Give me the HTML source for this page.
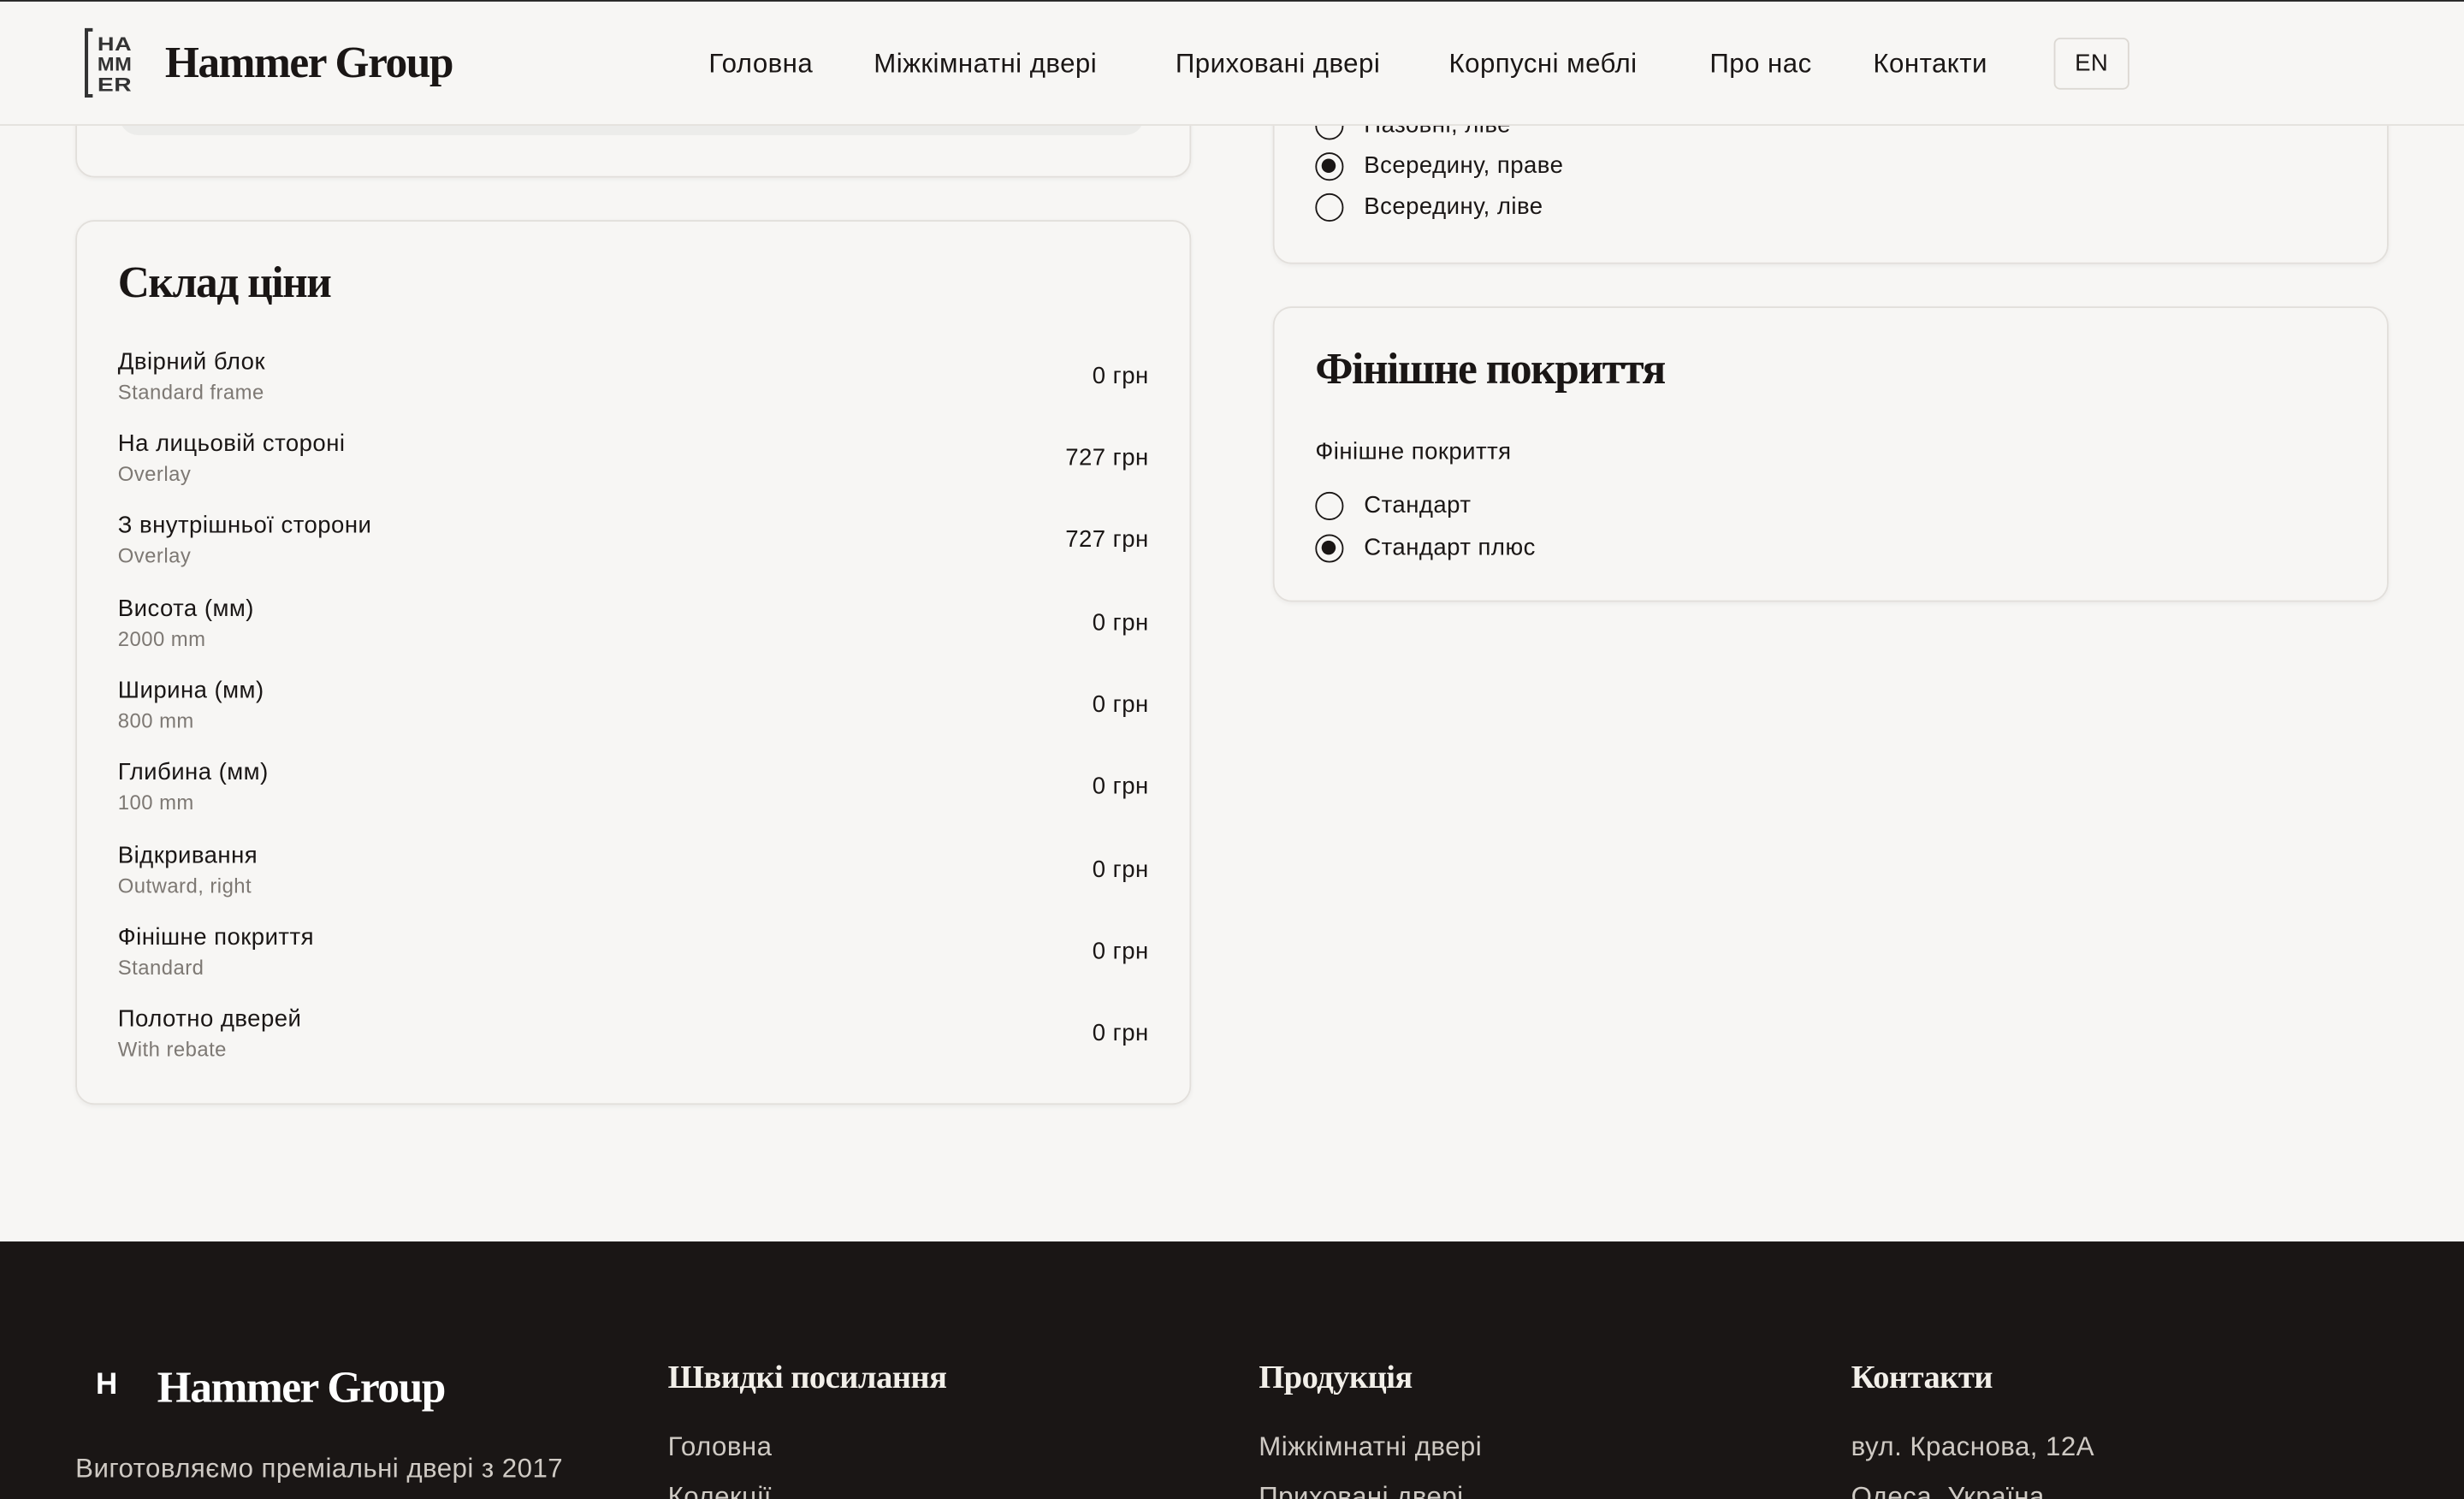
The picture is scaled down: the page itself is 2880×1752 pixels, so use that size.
<!DOCTYPE html>
<html><head><meta charset="utf-8"><style>
*{margin:0;padding:0;box-sizing:border-box}
html,body{width:2880px;height:1752px;overflow:hidden;background:#f7f6f4}
#w{position:absolute;left:0;top:0;width:1568px;height:954px;overflow:hidden;transform:scale(1.836735);transform-origin:0 0;font-family:"Liberation Sans","DejaVu Sans",sans-serif;color:#1a1615;letter-spacing:.25px}
.serif{font-family:"Liberation Serif","DejaVu Serif",serif;font-weight:bold;letter-spacing:-0.8px}
.card{position:absolute;background:#f7f6f4;border:1px solid #e2dfdb;border-radius:12px;box-shadow:0 1px 3px rgba(0,0,0,.05)}
.abs{position:absolute;white-space:nowrap}
.row{position:absolute;left:26px;right:26px;height:44px}
.row .l{font-size:15px;position:absolute;left:0;top:1px}
.row .s{font-size:13px;color:#7d7873;position:absolute;left:0;top:21px}
.row .p{font-size:15px;position:absolute;right:0;top:10px}
.radio{position:absolute;width:18px;height:18px;border:1.5px solid #1a1615;border-radius:50%}
.radio.on::after{content:"";position:absolute;left:3px;top:3px;width:9px;height:9px;border-radius:50%;background:#1a1615}
.rl{position:absolute;font-size:15px;white-space:nowrap}
.nav{position:absolute;top:31px;font-size:17px;white-space:nowrap}
.fh{position:absolute;top:864px;font-size:21px;color:#f2efe9}
.fl{position:absolute;font-size:17px;color:#cfcac4;white-space:nowrap}
</style></head><body><div id="w">
<div class="card" style="left:48px;top:-40px;width:710px;height:153px"></div>
<div style="position:absolute;left:76px;top:40px;width:652px;height:46px;background:#ececea;border-radius:0 0 12px 12px"></div>
<div class="card" style="left:810px;top:-40px;width:710px;height:208px"></div>
<div class="radio" style="left:837px;top:71px"></div><div class="rl" style="left:868px;top:71px">Назовні, ліве</div>
<div class="radio on" style="left:837px;top:97px"></div><div class="rl" style="left:868px;top:97px">Всередину, праве</div>
<div class="radio" style="left:837px;top:123px"></div><div class="rl" style="left:868px;top:123px">Всередину, ліве</div>

<div style="position:absolute;left:0;top:0;width:1568px;height:80px;background:#f7f6f4;border-top:1px solid #222;border-bottom:1px solid #e4e1dd"></div>
<svg class="abs" style="left:53px;top:17px" width="34" height="46" viewBox="0 0 34 46"><path d="M6 2H2V44H6" fill="none" stroke="#333" stroke-width="2.2"/>
<text x="9" y="15" font-family="Liberation Sans" font-weight="bold" font-size="12" fill="#333" textLength="22" lengthAdjust="spacingAndGlyphs">HA</text>
<text x="9" y="28" font-family="Liberation Sans" font-weight="bold" font-size="12" fill="#333" textLength="22" lengthAdjust="spacingAndGlyphs">MM</text>
<text x="9" y="41" font-family="Liberation Sans" font-weight="bold" font-size="12" fill="#333" textLength="22" lengthAdjust="spacingAndGlyphs">ER</text></svg>
<div class="abs serif" style="left:105px;top:25px;font-size:28px">Hammer Group</div>
<div class="nav" style="left:451px">Головна</div>
<div class="nav" style="left:556px">Міжкімнатні двері</div>
<div class="nav" style="left:748px">Приховані двері</div>
<div class="nav" style="left:922px">Корпусні меблі</div>
<div class="nav" style="left:1088px">Про нас</div>
<div class="nav" style="left:1192px">Контакти</div>
<div style="position:absolute;left:1307px;top:24px;width:48px;height:33px;border:1px solid #dcd8d3;border-radius:4px;font-size:15px;text-align:center;line-height:31px">EN</div>

<div class="card" style="left:48px;top:140px;width:710px;height:563px">
<div class="abs serif" style="left:26px;top:24px;font-size:28px">Склад ціни</div>
<div class="row" style="top:80px"><div class="l">Двірний блок</div><div class="s">Standard frame</div><div class="p">0 грн</div></div>
<div class="row" style="top:132px"><div class="l">На лицьовій стороні</div><div class="s">Overlay</div><div class="p">727 грн</div></div>
<div class="row" style="top:184px"><div class="l">З внутрішньої сторони</div><div class="s">Overlay</div><div class="p">727 грн</div></div>
<div class="row" style="top:237px"><div class="l">Висота (мм)</div><div class="s">2000 mm</div><div class="p">0 грн</div></div>
<div class="row" style="top:289px"><div class="l">Ширина (мм)</div><div class="s">800 mm</div><div class="p">0 грн</div></div>
<div class="row" style="top:341px"><div class="l">Глибина (мм)</div><div class="s">100 mm</div><div class="p">0 грн</div></div>
<div class="row" style="top:394px"><div class="l">Відкривання</div><div class="s">Outward, right</div><div class="p">0 грн</div></div>
<div class="row" style="top:446px"><div class="l">Фінішне покриття</div><div class="s">Standard</div><div class="p">0 грн</div></div>
<div class="row" style="top:498px"><div class="l">Полотно дверей</div><div class="s">With rebate</div><div class="p">0 грн</div></div>
</div>

<div class="card" style="left:810px;top:195px;width:710px;height:188px">
<div class="abs serif" style="left:26px;top:24px;font-size:28px">Фінішне покриття</div>
<div class="abs" style="left:26px;top:83px;font-size:15px">Фінішне покриття</div>
<div class="radio" style="left:26px;top:117px"></div><div class="rl" style="left:57px;top:117px">Стандарт</div>
<div class="radio on" style="left:26px;top:144px"></div><div class="rl" style="left:57px;top:144px">Стандарт плюс</div>
</div>

<div style="position:absolute;left:0;top:790px;width:1568px;height:164px;background:#1a1615"></div>
<div class="abs" style="left:61px;top:871px;font-size:19px;font-weight:bold;color:#fff">H</div>
<div class="abs serif" style="left:100px;top:868px;font-size:28px;color:#fff">Hammer Group</div>
<div class="fl" style="left:48px;top:925px">Виготовляємо преміальні двері з 2017</div>
<div class="fh serif" style="left:425px;letter-spacing:-0.3px">Швидкі посилання</div>
<div class="fh serif" style="left:801px;letter-spacing:-0.3px">Продукція</div>
<div class="fh serif" style="left:1178px;letter-spacing:-0.3px">Контакти</div>
<div class="fl" style="left:425px;top:911px">Головна</div>
<div class="fl" style="left:425px;top:943px">Колекції</div>
<div class="fl" style="left:801px;top:911px">Міжкімнатні двері</div>
<div class="fl" style="left:801px;top:943px">Приховані двері</div>
<div class="fl" style="left:1178px;top:911px">вул. Краснова, 12А</div>
<div class="fl" style="left:1178px;top:943px">Одеса, Україна</div>
</div></body></html>
